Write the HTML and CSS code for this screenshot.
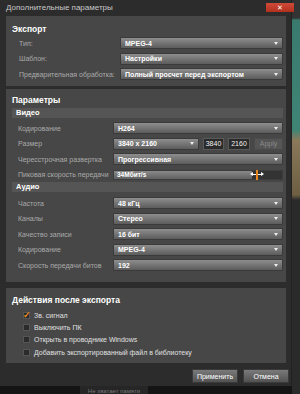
FILE: index.html
```html
<!DOCTYPE html>
<html lang="ru">
<head>
  <meta charset="UTF-8">
  <title>Дополнительные параметры</title>
  <link rel="stylesheet" href="styles.css">
</head>
<body>
  <div class="screen">
    <div class="dialog">
      <div class="titlebar">
        <span>Дополнительные параметры</span>
        <button class="close">✕</button>
      </div>

      <section class="panel export">
        <h3>Экспорт</h3>
        <div class="rows">
          <div class="row"><label>Тип:</label><div class="select">MPEG-4</div></div>
          <div class="row"><label>Шаблон:</label><div class="select">Настройки</div></div>
          <div class="row"><label>Предварительная обработка:</label><div class="select">Полный просчет перед экспортом</div></div>
        </div>
      </section>

      <section class="panel params">
        <h3>Параметры</h3>
        <div class="subhead">Видео</div>
        <div class="rows">
          <div class="row"><label>Кодирование</label><div class="select">H264</div></div>
          <div class="row">
            <label>Размер</label>
            <div class="size">
              <div class="select">3840 x 2160</div>
              <div class="num">3840</div>
              <div class="num">2160</div>
              <div class="apply">Apply</div>
            </div>
          </div>
          <div class="row"><label>Чересстрочная развертка</label><div class="select">Прогрессивная</div></div>
          <div class="row">
            <label>Пиковая скорость передачи</label>
            <div class="slider">
              <div class="fill">34Мбит/s</div>
              <div class="handle"><span class="grip"></span></div>
            </div>
          </div>
        </div>
        <div class="subhead audio">Аудио</div>
        <div class="rows">
          <div class="row"><label>Частота</label><div class="select">48 кГц</div></div>
          <div class="row"><label>Каналы</label><div class="select">Стерео</div></div>
          <div class="row"><label>Качество записи</label><div class="select">16 бит</div></div>
          <div class="row"><label>Кодирование</label><div class="select">MPEG-4</div></div>
          <div class="row"><label>Скорость передачи битов</label><div class="select">192</div></div>
        </div>
      </section>

      <section class="panel actions">
        <h3>Действия после экспорта</h3>
        <div class="check"><span class="box checked">✓</span>Зв. сигнал</div>
        <div class="check"><span class="box"></span>Выключить ПК</div>
        <div class="check"><span class="box"></span>Открыть в проводнике Windows</div>
        <div class="check"><span class="box"></span>Добавить экспортированный файл в библиотеку</div>
      </section>

      <div class="footer">
        <button class="btn">Применить</button>
        <button class="btn">Отмена</button>
      </div>
    </div>

    <div class="desktop"></div>
    <div class="taskbar"><span class="tab">Не хватает памяти</span></div>
  </div>
</body>
</html>
```

FILE: styles.css
```css
body {
  margin: 0;
  background: #151515;
  font-family: "Liberation Sans", Arial, sans-serif;
  font-size: 7px;
  color: #aaa;
}

.screen {
  display: grid;
  grid-template-columns: 292px 1fr;
  grid-template-rows: 386px 8px;
  width: 300px;
  height: 394px;
  overflow: hidden;
}

.dialog {
  background: #2c2c2c;
  border-right: 1px solid #222;
  padding: 0 4px 0 6px;
  display: flex;
  flex-direction: column;
}

.titlebar {
  height: 16px;
  margin-left: -6px;
  padding-left: 6px;
  display: flex;
  align-items: flex-start;
  justify-content: space-between;
  font-size: 8px;
  line-height: 16px;
  color: #c8c8c8;
}

.close {
  margin: 3px -7px 0 0;
  width: 28px;
  height: 9px;
  padding: 0;
  border: 0;
  background: linear-gradient(#d04a38, #b3301f);
  color: #fff;
  font-size: 7px;
  line-height: 9px;
  position: relative;
  z-index: 1;
}

.panel {
  background: #474747;
  margin-right: 1px;
}

.panel h3 {
  margin: 0;
  font-size: 8.5px;
  line-height: 10px;
  font-weight: bold;
  color: #fff;
}

.export {
  padding: 8px 3px 6px 6px;
}

.export .row {
  grid-template-columns: 108px 1fr;
}

.export .row label {
  padding-left: 7px;
}

.rows {
  display: flex;
  flex-direction: column;
  gap: 3.5px;
  margin-top: 3px;
}

.row {
  display: grid;
  grid-template-columns: 101px 1fr;
  align-items: center;
  height: 12px;
}

.row label {
  padding-left: 6px;
  white-space: nowrap;
}

.select {
  height: 12px;
  box-sizing: border-box;
  display: flex;
  align-items: center;
  padding: 0 4px;
  background: linear-gradient(#8e8e8e, #5c5c5c);
  border: 1px solid #3a3a3a;
  border-radius: 1px;
  color: #fff;
  font-weight: bold;
  font-size: 7px;
  white-space: nowrap;
}

.select::after {
  content: "";
  margin-left: auto;
  border-left: 2.5px solid transparent;
  border-right: 2.5px solid transparent;
  border-top: 3px solid #eee;
}

.params {
  margin-top: 3px;
  padding: 6px 3px 11px 6px;
}

.subhead {
  margin-top: 3px;
  height: 10px;
  line-height: 10px;
  background: #555;
  padding-left: 4px;
  color: #fff;
  font-weight: bold;
  font-size: 7.5px;
}

.subhead + .rows {
  margin-top: 4px;
}

.audio {
  margin-top: 1px;
}

.audio + .rows {
  margin-top: 5.5px;
}

.size {
  display: grid;
  grid-template-columns: 86px 21px 22px 1fr;
  gap: 4px;
}

.num {
  height: 12px;
  box-sizing: border-box;
  background: #2a2a2a;
  border: 1px solid #5a5a5a;
  color: #eee;
  line-height: 10px;
  text-align: center;
}

.apply {
  height: 12px;
  box-sizing: border-box;
  background: #555;
  border: 1px solid #4a4a4a;
  color: #8a8a8a;
  line-height: 10px;
  text-align: center;
}

.slider {
  position: relative;
  height: 10px;
  background: #333;
  border: 1px solid #3c3c3c;
  box-sizing: border-box;
}

.fill {
  width: 138px;
  height: 100%;
  background: linear-gradient(#8a8a8a, #606060);
  color: #fff;
  font-weight: bold;
  font-size: 6.5px;
  line-height: 8px;
  padding-left: 3px;
  box-sizing: border-box;
}

.handle {
  position: absolute;
  left: 136px;
  top: -1px;
  width: 14px;
  height: 10px;
  display: flex;
  align-items: center;
  justify-content: center;
}

.grip {
  position: relative;
  width: 12px;
  height: 1px;
  background: #fff;
}

.grip::before,
.grip::after {
  content: "";
  position: absolute;
  top: -2px;
  border-top: 2.5px solid transparent;
  border-bottom: 2.5px solid transparent;
}

.grip::before {
  left: -1px;
  border-right: 3px solid #fff;
}

.grip::after {
  right: -1px;
  border-left: 3px solid #fff;
}

.handle::after {
  content: "";
  position: absolute;
  left: 6px;
  top: 0;
  width: 2px;
  height: 10px;
  background: #e8841c;
}

.actions {
  margin-top: 6px;
  padding: 7px 3px 5px 6px;
}

.actions h3 {
  margin-bottom: 4px;
}

.check {
  display: flex;
  align-items: center;
  gap: 4px;
  height: 12.3px;
  padding-left: 11px;
  color: #e0e0e0;
  white-space: nowrap;
}

.box {
  width: 7px;
  height: 7px;
  box-sizing: border-box;
  background: #2b2b2b;
  border: 1px solid #555;
  color: #f0901e;
  font-size: 9px;
  font-weight: bold;
  line-height: 5px;
  text-indent: -1px;
}

.footer {
  display: flex;
  justify-content: flex-end;
  gap: 5px;
  padding-top: 6px;
  margin-right: -2px;
}

.btn {
  width: 46px;
  height: 14px;
  padding: 0;
  border: 1px solid #3a3a3a;
  background: linear-gradient(#7a7a7a, #525252);
  color: #fff;
  font-family: "Liberation Sans", Arial, sans-serif;
  font-size: 7px;
}

.desktop {
  grid-column: 2;
  grid-row: 1 / 3;
  background: linear-gradient(#333 0, #333 18px, #3a7a6e 20px, #3f8576 130px, #8a7a5a 140px, #6e5e42 195px, #2a2a2a 200px, #2a2a2a 100%);
}

.taskbar {
  grid-column: 1;
  grid-row: 2;
  background: #141414;
  padding-left: 80px;
}

.tab {
  display: block;
  width: 68px;
  height: 8px;
  background: #262626;
  color: #777;
  font-size: 6px;
  line-height: 10px;
  text-align: center;
  overflow: hidden;
}
```
